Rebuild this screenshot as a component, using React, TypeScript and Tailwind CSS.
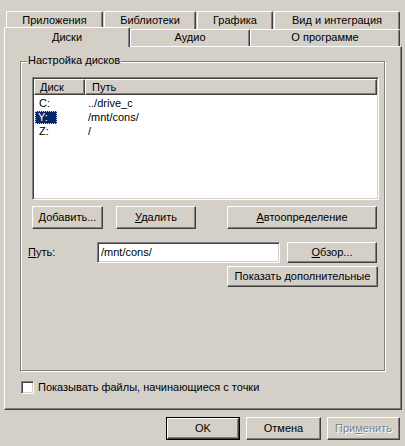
import React from "react";

const raised =
  "border border-t-white border-l-white border-r-[#404040] border-b-[#404040] shadow-[inset_-1px_-1px_#808080] bg-[#d4d0c8]";
const sunken =
  "border border-t-[#808080] border-l-[#808080] border-b-white border-r-white shadow-[inset_1px_1px_#404040,inset_-1px_-1px_#d4d0c8] bg-white";
const tabBase =
  "flex justify-center border-l border-t border-white border-r border-r-[#404040] shadow-[inset_-1px_0_#808080] rounded-tl-[2px] rounded-tr-[2px] bg-[#d4d0c8] leading-[13px]";

function Btn({ w, h, ml, children }: { w: string; h: string; ml?: string; children: React.ReactNode }) {
  return (
    <div className={`${raised} ${w} ${h} ${ml ?? ""} flex items-center justify-center leading-[13px]`}>
      {children}
    </div>
  );
}

export default function App() {
  return (
    <div className="w-[405px] h-[446px] bg-[#d4d0c8] pt-[11px] text-[11px] text-black font-['Liberation_Sans','Arial',sans-serif] overflow-hidden select-none">
      {/* Tab row 1 */}
      <div className="flex items-start h-[18px] pl-[6px] gap-[1px]">
        <div className={`${tabBase} w-[97px] h-[18px] pt-[2px]`}>Приложения</div>
        <div className={`${tabBase} w-[92px] h-[18px] pt-[2px]`}>Библиотеки</div>
        <div className={`${tabBase} w-[76px] h-[18px] pt-[2px]`}>Графика</div>
        <div className={`${tabBase} w-[126px] h-[18px] pt-[2px]`}>Вид и интеграция</div>
      </div>
      {/* Tab row 2 */}
      <div className="flex items-start h-[17px] pl-[4px]">
        <div className={`${tabBase} relative z-10 w-[126px] h-[20px] -mt-[2px] pt-[3px]`}>Диски</div>
        <div className={`${tabBase} w-[120px] h-[17px] pt-[1px]`}>Аудио</div>
        <div className={`${tabBase} w-[150px] h-[17px] pt-[1px]`}>О программе</div>
      </div>

      {/* Panel */}
      <div className="ml-[4px] w-[398px] h-[364px] border border-t-white border-l-white border-r-[#404040] border-b-[#404040] shadow-[inset_-1px_-1px_#808080]">
        {/* Group box */}
        <div className="relative ml-[15px] mt-[14px] w-[365px] h-[310px] border border-[#808080] shadow-[inset_1px_1px_#ffffff,1px_1px_#ffffff]">
          <span className="absolute -top-[8px] left-[6px] px-[1px] bg-[#d4d0c8] leading-[13px]">
            Настройка дисков
          </span>

          {/* List view */}
          <div className={`${sunken} ml-[11px] mt-[15px] w-[347px] h-[123px] p-[1px]`}>
            <div className="flex h-[16px]">
              <div className={`${raised} w-[51px] h-[16px] pl-[5px] flex items-center leading-[13px]`}>Диск</div>
              <div className={`${raised} flex-1 h-[16px] pl-[6px] flex items-center leading-[13px]`}>Путь</div>
            </div>
            <div className="mt-[1px]">
              <div className="flex h-[14px] items-center">
                <div className="w-[51px] pl-[5px]">C:</div>
                <div className="pl-[3px]">../drive_c</div>
              </div>
              <div className="flex h-[14px] items-center">
                <div className="w-[51px] pl-[1px] flex items-center">
                  <span className="w-[22px] h-[13px] leading-[11px] px-[2px] bg-[#0a246a] text-white border border-dotted border-[#e6d78c]">
                    Y:
                  </span>
                </div>
                <div className="pl-[3px]">/mnt/cons/</div>
              </div>
              <div className="flex h-[14px] items-center">
                <div className="w-[51px] pl-[5px]">Z:</div>
                <div className="pl-[3px]">/</div>
              </div>
            </div>
          </div>

          {/* Buttons row */}
          <div className="flex mt-[6px] ml-[11px]">
            <Btn w="w-[71px]" h="h-[23px]">
              <span><u>Д</u>обавить...</span>
            </Btn>
            <Btn w="w-[80px]" h="h-[23px]" ml="ml-[13px]">
              <span><u>У</u>далить</span>
            </Btn>
            <Btn w="w-[150px]" h="h-[23px]" ml="ml-[31px]">
              <span><u>А</u>втоопределение</span>
            </Btn>
          </div>

          {/* Path row */}
          <div className="flex items-center mt-[13px]">
            <div className="ml-[7px] w-[69px] leading-[13px]">
              <u>П</u>уть:
            </div>
            <div className={`${sunken} w-[183px] h-[21px] pl-[3px] flex items-center leading-[13px]`}>/mnt/cons/</div>
            <Btn w="w-[90px]" h="h-[21px]" ml="ml-[7px]">
              <span><u>О</u>бзор...</span>
            </Btn>
          </div>
          <div className="flex mt-[3px] ml-[206px]">
            <Btn w="w-[151px]" h="h-[21px]">
              <span>Показать <u>д</u>ополнительные</span>
            </Btn>
          </div>
        </div>

        {/* Checkbox */}
        <div className="flex items-center mt-[10px] ml-[16px]">
          <div className={`${sunken} w-[13px] h-[13px]`} />
          <span className="ml-[4px] leading-[13px]">Показывать файлы, начинающиеся с точки</span>
        </div>
      </div>

      {/* Bottom buttons */}
      <div className="flex mt-[7px] pl-[166px]">
        <div className="w-[74px] h-[23px] border border-black flex">
          <div className="flex-1 flex items-center justify-center border border-t-white border-l-white border-r-[#404040] border-b-[#404040] shadow-[inset_-1px_-1px_#808080] leading-[13px]">
            OK
          </div>
        </div>
        <Btn w="w-[75px]" h="h-[23px]" ml="ml-[6px]">
          <span>Отмена</span>
        </Btn>
        <Btn w="w-[73px]" h="h-[23px]" ml="ml-[6px]">
          <span className="text-[#808080] [text-shadow:1px_1px_0_#ffffff]">
            При<u>м</u>енить
          </span>
        </Btn>
      </div>
    </div>
  );
}
